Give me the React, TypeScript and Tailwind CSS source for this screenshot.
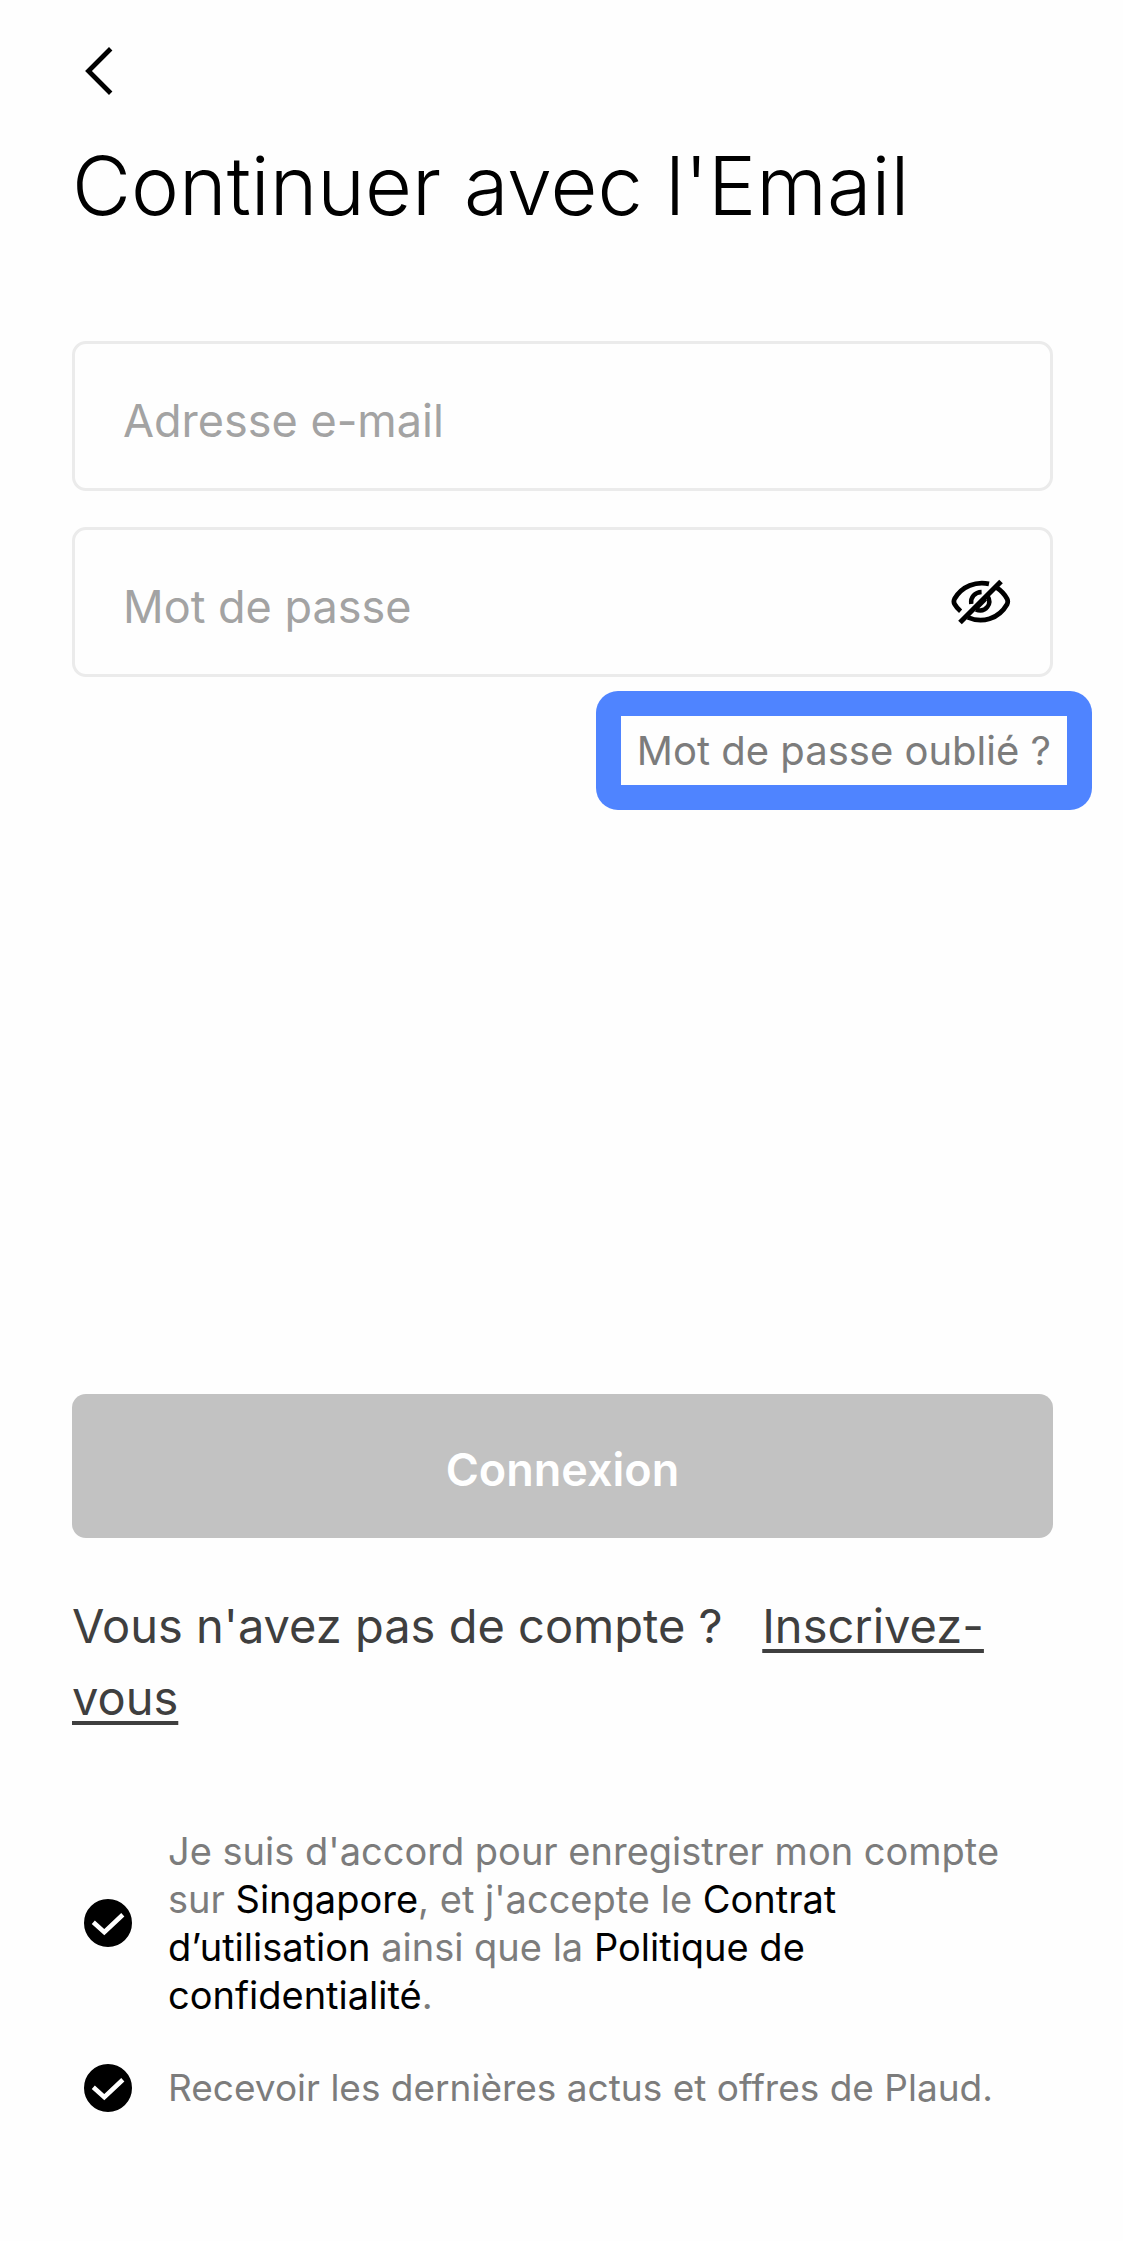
import React, { useState } from 'react';

interface ConsentRowProps {
  id: string;
  checked: boolean;
  onChange: (value: boolean) => void;
  labelClassName: string;
  children: React.ReactNode;
}

const ConsentRow: React.FC<ConsentRowProps> = ({ id, checked, onChange, labelClassName, children }) => (
  <div className="flex items-center gap-9 pr-8 pl-3">
    <span className="grid size-12 shrink-0">
      <input
        id={id}
        type="checkbox"
        checked={checked}
        onChange={(e) => onChange(e.target.checked)}
        className="col-start-1 row-start-1 size-12 appearance-none rounded-full border-3 border-black checked:bg-black"
      />
      {checked && (
        <svg
          viewBox="0 0 48 48"
          fill="none"
          stroke="white"
          strokeWidth="4.6"
          className="pointer-events-none col-start-1 row-start-1 size-12"
        >
          <path d="M9.3 23.2 20.3 33.2 38.8 15.8" />
        </svg>
      )}
    </span>
    <label htmlFor={id} className={labelClassName}>
      {children}
    </label>
  </div>
);

const EyeOffIcon = () => (
  <svg viewBox="0 0 60 50" fill="none" stroke="currentColor" strokeWidth="4.8" className="h-[50px] w-[60px]">
    <path d="M38 6.900C25 4.200 11 9 3.600 21.800Q2.200 24.600 3.600 27.200Q5.400 30.600 9.600 34.200" />
    <path d="M45.500 10.500C49.600 13.200 53.600 17.200 56.100 21.800Q57.400 24.600 56.100 27.200C47.600 42.200 31 46.600 16.800 40.400" />
    <path d="M30.600 15C24 15.200 19.200 20 20.200 27" strokeWidth="4.4" />
    <path d="M36.400 18.600C41.600 26.600 35 36.200 24.800 32.600" strokeWidth="4.4" />
    <path d="M50 4.500 9 45.500" strokeWidth="5.2" />
    <path d="M35 22.500 26.500 31" strokeWidth="3" />
  </svg>
);

const App: React.FC = () => {
  const [showPassword, setShowPassword] = useState(false);
  const [terms, setTerms] = useState(true);
  const [news, setNews] = useState(true);

  return (
    <main className="min-h-screen bg-[#fefefe] pt-11 pr-[70px] pb-16 pl-[72px] font-['Inter',sans-serif]">
      <button type="button" aria-label="Retour" className="block pl-3">
        <svg viewBox="0 0 30 54" fill="none" stroke="black" strokeWidth="4.8" className="h-[54px] w-[30px]">
          <path d="M26.700 4.800 4.500 27 26.700 49.200" />
        </svg>
      </button>

      <h1 className="mt-[38px] text-[81px] leading-[100px] font-light text-black">Continuer avec l'Email</h1>

      <form onSubmit={(e) => e.preventDefault()} className="mt-[105px] flex flex-col">
        <input
          type="email"
          aria-label="Adresse e-mail"
          placeholder="Adresse e-mail"
          className="h-[150px] w-full rounded-[14px] border-3 border-[#ebebeb] px-12 pt-2 text-[45px] outline-none placeholder:text-[#a3a3a3]"
        />
        <div className="mt-9 flex h-[150px] items-center rounded-[14px] border-3 border-[#ebebeb] pr-[39px] pl-12">
          <input
            type={showPassword ? 'text' : 'password'}
            aria-label="Mot de passe"
            placeholder="Mot de passe"
            className="h-full min-w-0 flex-1 pt-2 text-[45px] outline-none placeholder:text-[#a3a3a3]"
          />
          <button
            type="button"
            aria-label="Afficher le mot de passe"
            onClick={() => setShowPassword(!showPassword)}
            className="text-black"
          >
            <EyeOffIcon />
          </button>
        </div>
        <a
          href="#"
          className="mt-[14px] -mr-[39px] self-end rounded-[22px] bg-[#4f84ff] p-[25px] text-[40px] leading-[69px] text-[#7c7c7c]"
        >
          <span className="block bg-[#fefefe] px-4">Mot de passe oublié ?</span>
        </a>

        <button
          type="submit"
          className="mt-[584px] h-36 rounded-[14px] bg-[#c2c2c2] pt-2 text-[45px] font-semibold text-white"
        >
          Connexion
        </button>
      </form>

      <p className="mt-[52px] text-[47px] leading-[72px] text-[#3f3f3f]">
        Vous n'avez pas de compte ?&nbsp;&nbsp;{' '}
        <a href="#" className="underline decoration-4 underline-offset-6">
          Inscrivez-vous
        </a>
      </p>

      <div className="mt-[93px] flex flex-col gap-[45px]">
        <ConsentRow
          id="terms"
          checked={terms}
          onChange={setTerms}
          labelClassName="text-[38px] leading-[48px] text-[#7c7c7c]"
        >
          Je suis d'accord pour enregistrer mon compte sur <span className="text-black">Singapore</span>, et j'accepte
          le{' '}
          <a href="#" className="text-black">
            Contrat d’utilisation
          </a>{' '}
          ainsi que la{' '}
          <a href="#" className="text-black">
            Politique de confidentialité
          </a>
          .
        </ConsentRow>
        <ConsentRow
          id="news"
          checked={news}
          onChange={setNews}
          labelClassName="text-[37px] leading-[48px] text-[#7c7c7c]"
        >
          Recevoir les dernières actus et offres de Plaud.
        </ConsentRow>
      </div>
    </main>
  );
};

export default App;
